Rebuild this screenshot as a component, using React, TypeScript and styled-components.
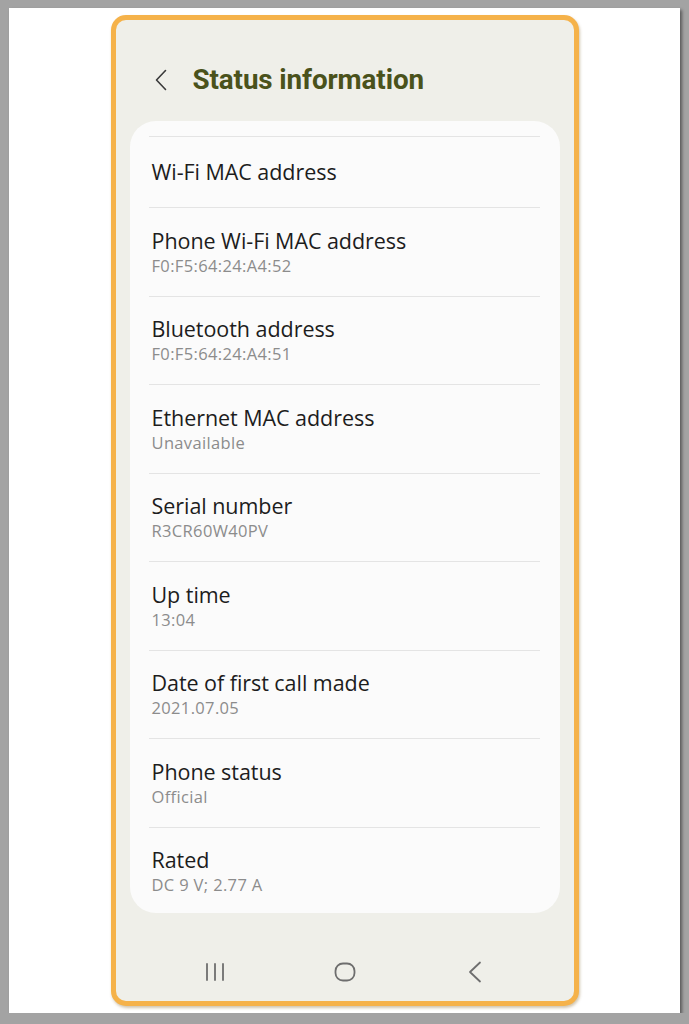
import styled, { createGlobalStyle } from 'styled-components';

const GlobalStyle = createGlobalStyle`
  html, body {
    margin: 0;
    padding: 0;
    background-color: #a3a3a3;
    font-family: "Open Sans", Roboto, "Liberation Sans", sans-serif;
  }
`;

const Sheet = styled.div`
  box-sizing: border-box;
  margin: 8px 9px 0 9px;
  height: 1005px;
  padding-top: 7px;
  background-color: #fff;
  box-shadow: 2px 2px 3px rgba(0, 0, 0, 0.45);
  display: flex;
  justify-content: center;
`;

const Phone = styled.div`
  box-sizing: border-box;
  width: 468px;
  height: 991px;
  border: 5px solid #f5b24a;
  border-radius: 15px;
  background-color: #efefe9;
  box-shadow: 1px 2px 3px rgba(120, 90, 30, 0.35);
  display: flex;
  flex-direction: column;
  overflow: hidden;
`;

const Header = styled.div`
  height: 101px;
  display: flex;
  align-items: center;
  padding: 18px 0 0 38px;
  gap: 25px;
  box-sizing: border-box;
`;

const HeaderTitle = styled.h1`
  margin: 0;
  font-family: Roboto, "Liberation Sans", sans-serif;
  font-size: 27.8px;
  font-weight: 700;
  letter-spacing: -0.1px;
  color: #4a521b;
`;

const Card = styled.div`
  margin: 0 14px;
  height: 792px;
  padding: 15px 20px 0 19px;
  box-sizing: border-box;
  background-color: #fbfbfb;
  border-radius: 26px;
  overflow: hidden;
`;

const Row = styled.div<{ $short?: boolean }>`
  box-sizing: border-box;
  height: ${(p) => (p.$short ? '71px' : '88.5px')};
  border-top: 1px solid #e4e4e4;
  display: flex;
  flex-direction: column;
  justify-content: center;
  padding-left: 3px;
`;

const RowTitle = styled.div`
  font-size: 21.5px;
  color: #1d1d1d;
  line-height: 28px;
  letter-spacing: -0.05px;
`;

const RowValue = styled.div`
  font-size: 16.5px;
  color: #8c8c8c;
  line-height: 22px;
  letter-spacing: 0.35px;
`;

const NavBar = styled.div`
  flex: 1;
  display: flex;
  align-items: center;
  justify-content: center;
  padding-top: 29px;
  box-sizing: border-box;
`;

const NavSlot = styled.div`
  width: 130px;
  display: flex;
  justify-content: center;
`;

const items: { title: string; value?: string }[] = [
  { title: 'Phone Wi-Fi MAC address', value: 'F0:F5:64:24:A4:52' },
  { title: 'Bluetooth address', value: 'F0:F5:64:24:A4:51' },
  { title: 'Ethernet MAC address', value: 'Unavailable' },
  { title: 'Serial number', value: 'R3CR60W40PV' },
  { title: 'Up time', value: '13:04' },
  { title: 'Date of first call made', value: '2021.07.05' },
  { title: 'Phone status', value: 'Official' },
  { title: 'Rated', value: 'DC 9 V; 2.77 A' },
];

export default function App() {
  return (
    <>
      <GlobalStyle />
      <Sheet>
        <Phone>
          <Header>
            <svg width="14" height="22" viewBox="0 0 14 22" fill="none">
              <path d="M11.5 1.5 L2.5 11 L11.5 20.5" stroke="#3a3a3a" strokeWidth="1.6" strokeLinecap="round" strokeLinejoin="round" />
            </svg>
            <HeaderTitle>Status information</HeaderTitle>
          </Header>
          <Card>
            <Row $short>
              <RowTitle>Wi-Fi MAC address</RowTitle>
            </Row>
            {items.map((it) => (
              <Row key={it.title}>
                <RowTitle>{it.title}</RowTitle>
                {it.value && <RowValue>{it.value}</RowValue>}
              </Row>
            ))}
          </Card>
          <NavBar>
            <NavSlot>
              <svg width="20" height="18" viewBox="0 0 20 18">
                <path d="M2 1 V17 M10 1 V17 M18 1 V17" stroke="#6e6e6e" strokeWidth="1.8" strokeLinecap="round" />
              </svg>
            </NavSlot>
            <NavSlot>
              <svg width="22" height="20" viewBox="0 0 22 20">
                <rect x="1.5" y="1.5" width="19" height="17" rx="7.5" fill="none" stroke="#6e6e6e" strokeWidth="1.8" />
              </svg>
            </NavSlot>
            <NavSlot>
              <svg width="14" height="22" viewBox="0 0 14 22">
                <path d="M12 1.5 L2 11 L12 20.5" fill="none" stroke="#6e6e6e" strokeWidth="1.8" strokeLinecap="round" strokeLinejoin="round" />
              </svg>
            </NavSlot>
          </NavBar>
        </Phone>
      </Sheet>
    </>
  );
}
